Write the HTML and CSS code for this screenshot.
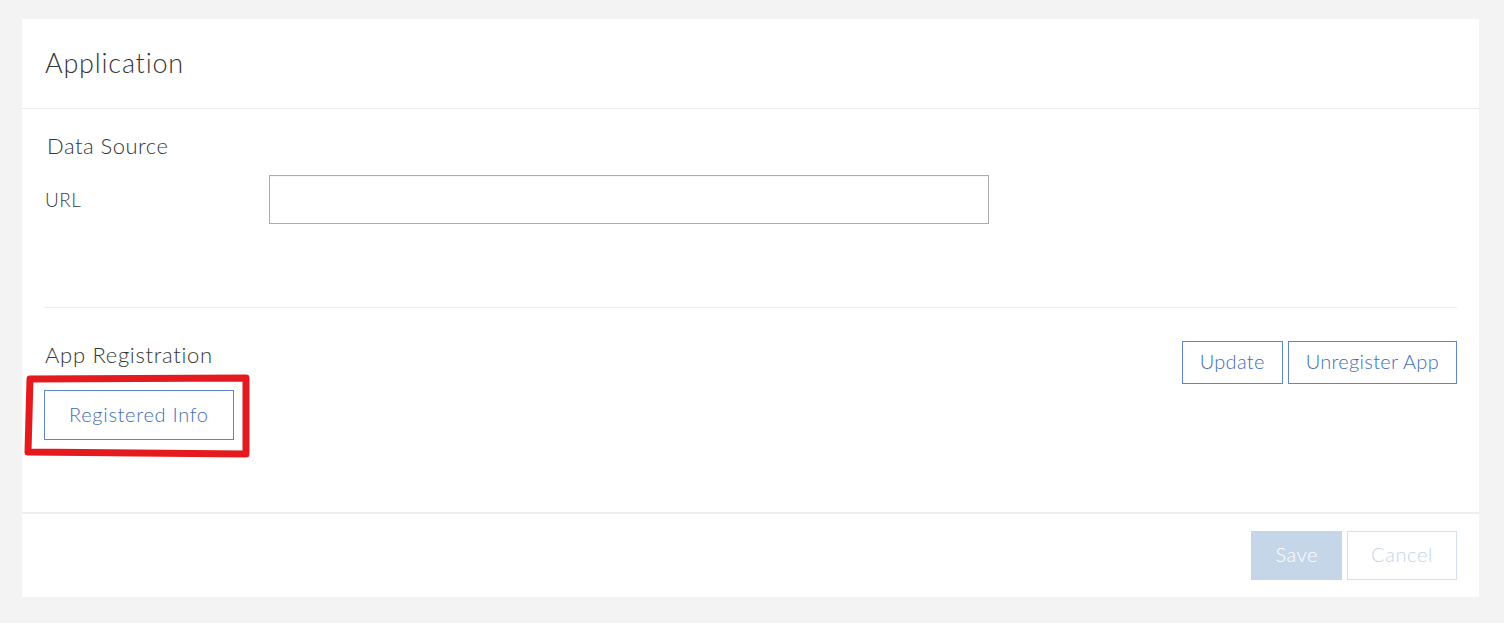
FILE: index.html
```html
<!DOCTYPE html>
<html lang="en">
<head>
<meta charset="utf-8">
<title>Application</title>
<link rel="stylesheet" href="styles.css">
</head>
<body>
<div class="card">
  <div class="card-header">
    <h1 class="title">Application</h1>
  </div>
  <div class="card-body">
    <section class="section-data">
      <h2 class="section-title indent">Data Source</h2>
      <div class="field-row">
        <label class="field-label" for="url">URL</label>
        <input class="field-input" id="url" type="text">
      </div>
    </section>
    <div class="divider"></div>
    <section class="section-reg">
      <div class="reg-left">
        <h2 class="section-title">App Registration</h2>
        <button class="btn btn-outline btn-tall">Registered Info</button>
      </div>
      <div class="reg-right">
        <button class="btn btn-outline btn-compact">Update</button>
        <button class="btn btn-outline btn-compact">Unregister App</button>
      </div>
    </section>
  </div>
  <div class="card-footer">
    <button class="btn btn-primary-disabled">Save</button>
    <button class="btn btn-outline-disabled">Cancel</button>
  </div>
</div>
<svg class="annotation" width="1504" height="623" viewBox="0 0 1504 623" aria-hidden="true">
  <path d="M30 379 L246 378 L246 454 L28 452 Z" fill="none" stroke="#e51a1f" stroke-width="7" stroke-linejoin="round" stroke-linecap="round"/>
</svg>
</body>
</html>
```
FILE: styles.css
```css
html, body {
  margin: 0;
  padding: 0;
}
body {
  background: #f3f3f3;
  font-family: "Lato", "Open Sans", "Liberation Sans", sans-serif;
  font-weight: 300;
  color: #3c3c3c;
  padding: 19px 25px 26px 22px;
  position: relative;
  min-height: 578px;
  letter-spacing: 0.5px;
}
.card {
  background: #ffffff;
  width: 1457px;
}
.card-header {
  height: 90px;
  border-bottom: 1px solid #ececec;
  padding-left: 23px;
  padding-bottom: 2px;
  box-sizing: border-box;
  display: flex;
  align-items: center;
}
.title {
  margin: 0;
  font-size: 27px;
  font-weight: 300;
  color: #363636;
  letter-spacing: 0.8px;
}
.card-body {
  padding: 22px 22px 0 22px;
}
.section-title {
  margin: 0;
  font-size: 22px;
  line-height: 30px;
  font-weight: 300;
  color: #363636;
}
.indent {
  padding-left: 3px;
}
.field-row {
  display: flex;
  align-items: center;
  margin-top: 14px;
}
.field-label {
  width: 225px;
  font-size: 19px;
  color: #3e3e3e;
  padding-left: 1px;
  box-sizing: border-box;
}
.field-input {
  width: 720px;
  height: 49px;
  box-sizing: border-box;
  border: 1px solid #acacac;
  box-shadow: inset 0 1px 1px rgba(0,0,0,0.04);
  background: #fff;
  margin: 0;
  padding: 0 10px;
}
.divider {
  height: 1px;
  background: #ececec;
  margin-top: 83px;
}
.section-reg {
  display: flex;
  justify-content: space-between;
  align-items: flex-start;
  padding-top: 32px;
  padding-bottom: 72px;
}
.reg-left {
  display: flex;
  flex-direction: column;
  align-items: flex-start;
}
.reg-left .section-title {
  padding-left: 1px;
  letter-spacing: 0.7px;
}
.reg-right {
  display: flex;
  gap: 5px;
  margin-top: 1px;
}
.btn {
  font-family: inherit;
  font-weight: 300;
  letter-spacing: 0.6px;
  font-size: 20px;
  height: 43px;
  padding: 0 17px 3px;
  background: #fff;
  box-sizing: border-box;
  margin: 0;
  cursor: pointer;
}
.btn-outline {
  border: 1px solid #5f86c6;
  color: #3f6db7;
}
.btn-compact {
  letter-spacing: 0.3px;
}
.btn-tall {
  height: 50px;
  padding: 0 24px 3px;
  margin-top: 20px;
  letter-spacing: 0.7px;
}
.card-footer {
  border-top: 2px solid #efefef;
  display: flex;
  justify-content: flex-end;
  align-items: flex-start;
  gap: 5px;
  padding: 17px 22px 0 0;
  box-sizing: border-box;
  height: 85px;
}
.btn-primary-disabled {
  height: 49px;
  background: #c5d6e9;
  border: 1px solid #c5d6e9;
  color: #ffffff;
  padding: 0 23px 3px;
}
.btn-outline-disabled {
  height: 49px;
  background: #ffffff;
  border: 1px solid #d3e0f1;
  color: #c2d4ea;
  padding: 0 23px 3px;
}
.annotation {
  position: absolute;
  left: 0;
  top: 0;
  pointer-events: none;
}
```
